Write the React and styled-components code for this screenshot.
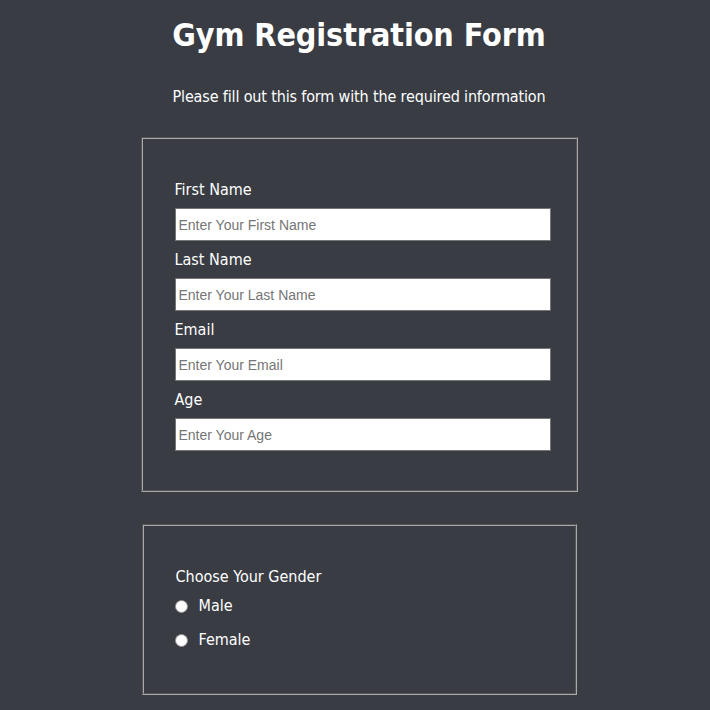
import React from 'react'
import styled, { createGlobalStyle } from 'styled-components'

const GlobalStyle = createGlobalStyle`
  html, body {
    margin: 0;
    padding: 0;
    background: #393c43;
  }
  body {
    font-family: "DejaVu Sans Condensed", "DejaVu Sans", sans-serif;
    color: #fff;
  }
`

const Page = styled.main`
  display: flex;
  flex-direction: column;
  align-items: center;
  padding: 0 0 40px 8px;
`

const Title = styled.h1`
  font-size: 32px;
  font-weight: 700;
  margin: 16px 0 0;
  line-height: 38px;
  letter-spacing: -0.1px;
`

const Subtitle = styled.p`
  font-size: 16px;
  margin: 33px 0 30px;
  line-height: 20px;
  letter-spacing: -0.15px;
`

const Box = styled.fieldset`
  box-sizing: border-box;
  width: 435px;
  margin: 0 0 32px;
  padding: ${p => p.$pad || '41px 25px 39px 32px'};
  border: 2px groove #a9a9a9;
  display: flex;
  flex-direction: column;
`

const Label = styled.label`
  font-size: 16px;
  line-height: 20px;
  margin: 0 0 8px;
`

const Input = styled.input`
  box-sizing: border-box;
  width: 376px;
  height: 33px;
  margin: 0 0 9px;
  padding: 0 3px;
  border: 1px solid #767676;
  background: #fff;
  font-family: "Liberation Sans", Arial, sans-serif;
  font-size: 14px;
  color: #222;
  &::placeholder {
    color: #757575;
  }
  &:last-of-type {
    margin-bottom: 0;
  }
`

const Question = styled.div`
  font-size: 16px;
  line-height: 20px;
  margin-bottom: 9px;
`

const Option = styled.label`
  display: flex;
  align-items: center;
  gap: 11px;
  font-size: 16px;
  line-height: 20px;
  margin-bottom: 14px;
  &:last-child {
    margin-bottom: 0;
  }
`

const Radio = styled.input.attrs({ type: 'radio' })`
  appearance: none;
  width: 13px;
  height: 13px;
  margin: 0 0 0 -1px;
  border-radius: 50%;
  border: 1px solid #8f8f8f;
  background: #fff;
  box-sizing: border-box;
`

const fields = [
  { id: 'first', label: 'First Name', placeholder: 'Enter Your First Name' },
  { id: 'last', label: 'Last Name', placeholder: 'Enter Your Last Name' },
  { id: 'email', label: 'Email', placeholder: 'Enter Your Email' },
  { id: 'age', label: 'Age', placeholder: 'Enter Your Age' },
]

export default function App() {
  return (
    <>
      <GlobalStyle />
      <Page>
        <Title>Gym Registration Form</Title>
        <Subtitle>Please fill out this form with the required information</Subtitle>
        <Box>
          {fields.map(f => (
            <React.Fragment key={f.id}>
              <Label htmlFor={f.id}>{f.label}</Label>
              <Input id={f.id} placeholder={f.placeholder} />
            </React.Fragment>
          ))}
        </Box>
        <Box $pad="41px 25px 43px 32px">
          <Question>Choose Your Gender</Question>
          <Option>
            <Radio name="gender" value="male" />
            Male
          </Option>
          <Option>
            <Radio name="gender" value="female" />
            Female
          </Option>
        </Box>
      </Page>
    </>
  )
}
